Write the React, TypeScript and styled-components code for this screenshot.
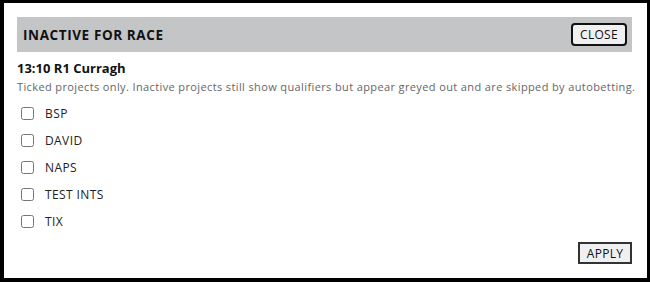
import React, { useState } from "react";
import styled, { createGlobalStyle } from "styled-components";

const GlobalStyle = createGlobalStyle`
  html, body {
    margin: 0;
    padding: 0;
    background: #000;
  }
  body {
    font-family: "Open Sans", "Noto Sans", sans-serif;
  }
`;

const Dialog = styled.div`
  box-sizing: border-box;
  display: flex;
  flex-direction: column;
  width: 643px;
  height: 275px;
  margin: 3px 0 0 4px;
  padding: 14px 15px 14px 13px;
  background: #fff;
`;

const Header = styled.div`
  display: flex;
  align-items: center;
  justify-content: space-between;
  height: 35px;
  padding: 0 5px 0 6px;
  background: #c4c5c7;
`;

const Title = styled.h2`
  margin: 0;
  font-size: 13.5px;
  font-weight: 700;
  color: #111;
  letter-spacing: 0.6px;
`;

const CloseButton = styled.button`
  box-sizing: border-box;
  width: 56px;
  height: 23px;
  padding: 0;
  border: 2px solid #111;
  border-radius: 4px;
  background: #f0f0f0;
  font-family: inherit;
  font-size: 12px;
  letter-spacing: 0.3px;
  color: #111;
`;

const RaceName = styled.h3`
  margin: 7px 0 0;
  font-size: 13px;
  font-weight: 700;
  color: #111;
  line-height: 18px;
`;

const Note = styled.p`
  margin: 3px 0 6px 0;
  font-size: 11px;
  letter-spacing: 0.38px;
  color: #666;
  line-height: 14px;
  white-space: nowrap;
`;

const List = styled.div`
  display: flex;
  flex-direction: column;
`;

const Row = styled.label`
  display: flex;
  align-items: center;
  gap: 11px;
  height: 27px;
  padding-left: 4px;
  font-size: 12px;
  font-weight: 500;
  letter-spacing: 0.4px;
  color: #222;
`;

const Box = styled.input`
  width: 13px;
  height: 13px;
  margin: 0;
`;

const Footer = styled.div`
  display: flex;
  justify-content: flex-end;
  margin-top: auto;
`;

const ApplyButton = styled.button`
  box-sizing: border-box;
  width: 54px;
  height: 22px;
  padding: 0;
  border: 2px solid #333;
  border-radius: 0;
  background: #f0f0f0;
  font-family: inherit;
  font-size: 12px;
  letter-spacing: 0.3px;
  color: #111;
`;

const projects = ["BSP", "DAVID", "NAPS", "TEST INTS", "TIX"];

export default function App() {
  const [ticked, setTicked] = useState<Record<string, boolean>>({});

  return (
    <>
      <GlobalStyle />
      <Dialog>
        <Header>
          <Title>INACTIVE FOR RACE</Title>
          <CloseButton>CLOSE</CloseButton>
        </Header>
        <RaceName>13:10 R1 Curragh</RaceName>
        <Note>
          Ticked projects only. Inactive projects still show qualifiers but appear greyed out and are
          skipped by autobetting.
        </Note>
        <List>
          {projects.map((p) => (
            <Row key={p}>
              <Box
                type="checkbox"
                checked={!!ticked[p]}
                onChange={(e) => setTicked({ ...ticked, [p]: e.target.checked })}
              />
              {p}
            </Row>
          ))}
        </List>
        <Footer>
          <ApplyButton>APPLY</ApplyButton>
        </Footer>
      </Dialog>
    </>
  );
}
